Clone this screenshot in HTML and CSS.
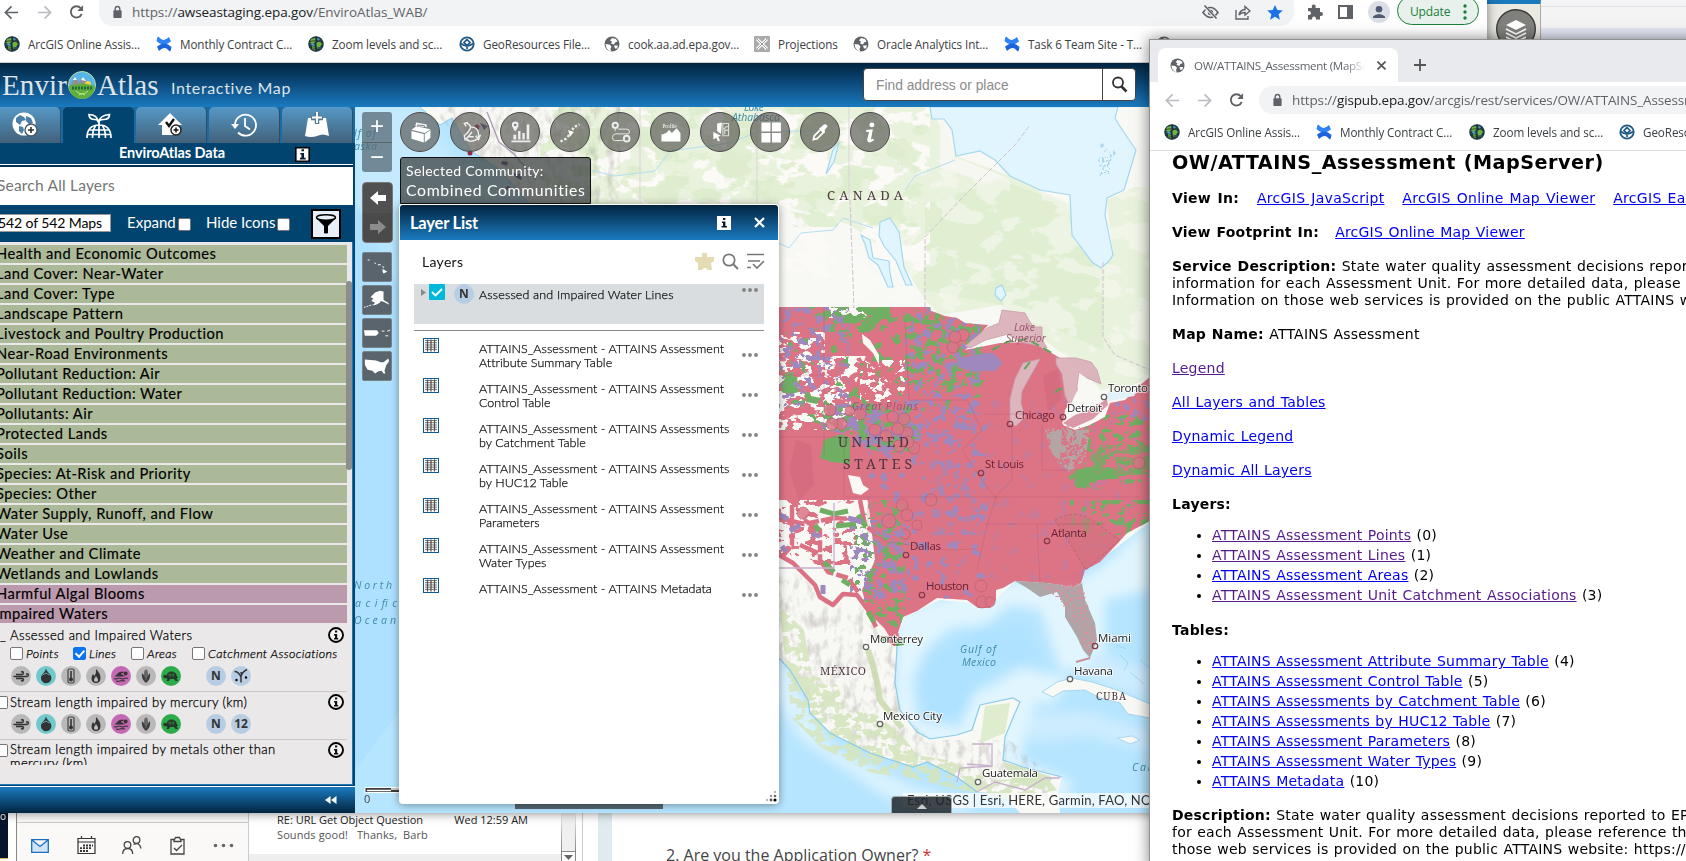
FILE: index.html
```html
<!DOCTYPE html>
<html lang="en">
<head>
<meta charset="utf-8">
<title>EnviroAtlas Interactive Map</title>
<link rel="stylesheet" href="styles.css">
</head>
<body>
<svg class="defs" width="0" height="0">
  <symbol id="back" viewBox="0 0 16 16"><path d="M15 8H2M8 1.5 1.5 8 8 14.5" fill="none" stroke="currentColor" stroke-width="1.8"/></symbol>
  <symbol id="fwd" viewBox="0 0 16 16"><path d="M1 8h13M8 1.5 14.5 8 8 14.5" fill="none" stroke="currentColor" stroke-width="1.8"/></symbol>
  <symbol id="reload" viewBox="0 0 16 16"><path d="M13.6 10A6 6 0 1 1 12.6 4" fill="none" stroke="currentColor" stroke-width="2"/><path d="M15 .8V7H8.8z" fill="currentColor"/></symbol>
  <symbol id="lock" viewBox="0 0 12 16"><rect x="1.5" y="5.5" width="9" height="8.5" rx="1" fill="#5f6368"/><path d="M3.5 6V4a2.5 2.5 0 0 1 5 0v2" fill="none" stroke="#5f6368" stroke-width="1.5"/></symbol>
  <symbol id="earth" viewBox="0 0 16 16"><circle cx="8" cy="8" r="7.8" fill="#243f46"/><path d="M3 3l4-1 1 3-3 3-3-1zM8 7l4-2 2 3-3 4-2 1zM4 10l3 1v3l-3-1z" fill="#6fb33c"/><path d="M9 2l3 1-2 2zM4 7l3 2-1 1-3-1zM11 11l2-1-1 3z" fill="#4aa3e0"/><path d="M1 6q7-3 14 1M1 11q7 3 14-1M8 0v16" fill="none" stroke="#17262c" stroke-width=".7"/></symbol>
  <symbol id="conf" viewBox="0 0 16 16"><path d="M1.500 1q1-.8 1.800.5Q7.500 6.500 13 1l2 4.500Q9 10 4 7.500 2 6.500.5 5z" fill="#2f84f5"/><path d="M14.500 15q-1 .8-1.800-.5Q8.500 9.500 3 15l-2-4.500Q7 6 12 8.500q2 1 3.500 2.500z" fill="#1c63dd"/></symbol>
  <symbol id="geo" viewBox="0 0 16 16"><circle cx="8" cy="8" r="6.700" fill="#fff" stroke="#205a87" stroke-width="1.800"/><path d="M8 3.500 11 6.500 8 9.500 5 6.500zM2 7.500q6 5 12 0M8 9.500V13" fill="none" stroke="#205a87" stroke-width="1.700"/></symbol>
  <symbol id="globe" viewBox="0 0 16 16"><circle cx="8" cy="8" r="7.500" fill="#5f6368"/><path d="M1.500 8l4 .5 2 2-1 2 .5 3Q2 14 1.500 8zM8 2l4 1 1.500 2.500-2.500 1-1 2-3-1 1-2-2-1zM10 9.500h4l-1 3-2 0z" fill="#fff"/></symbol>
  <symbol id="info" viewBox="0 0 16 16"><circle cx="8" cy="8" r="7" fill="#fff" fill-opacity=".5" stroke="#000" stroke-width="1.900"/><path d="M7 3.500h2.200v2H7zM6 7h3.200v4h1v1.500H6V11h1V8.400H6z" fill="#111"/></symbol>
  <symbol id="ibox" viewBox="0 0 14 14"><rect width="14" height="14" fill="#fff"/><path d="M6 2h2.400v2H6zM5 5.500h3.400V10H10v1.600H4.600V10H6V7H5z" fill="#0a1c2c"/></symbol>
  <symbol id="dots" viewBox="0 0 16 4"><g fill="#828282"><circle cx="2" cy="2" r="1.900"/><circle cx="8" cy="2" r="1.900"/><circle cx="14" cy="2" r="1.900"/></g></symbol>
  <symbol id="grid" viewBox="0 0 16 15"><rect x=".5" y=".5" width="15" height="14" fill="#fff" stroke="#0b5a92"/><path d="M4.500 1.500v12M8 1.500v12M11.500 1.500v12" stroke="#555" stroke-width="1.300"/><path d="M2 2.500h12M2 4.700h12M2 7h12M2 9.200h12M2 11.400h12" stroke="#555" stroke-width=".8"/></symbol>
  <symbol id="wind" viewBox="0 0 20 20"><circle cx="10" cy="10" r="10" fill="#b9b9b9"/><path d="M5 8.500h5.500q2 0 1.800-1.700T10 6M2.500 10.500H16q1.500-.3 1.300-1.600T15 8M5 12.500h6q1.800.2 1.400 1.600T10 14.500" fill="none" stroke="#333" stroke-width="1.500"/></symbol>
  <symbol id="drop" viewBox="0 0 20 20"><circle cx="10" cy="10" r="10" fill="#71c9cd"/><path d="M10 2.500q.5 2.500 3.500 5.500A5.200 5.200 0 1 1 5 11.500Q5 9 8 6.500 10 4 10 2.500z" fill="#333"/><path d="M6.500 9l3.500-2 3.500 2" fill="none" stroke="#71c9cd" stroke-width=".8"/></symbol>
  <symbol id="temp" viewBox="0 0 20 20"><circle cx="10" cy="10" r="10" fill="#b9b9b9"/><rect x="7" y="3" width="6" height="14" rx="1.500" fill="none" stroke="#444" stroke-width="1.200"/><path d="M10 5v7" stroke="#333" stroke-width="1.600"/><circle cx="10" cy="13.500" r="2" fill="#333"/></symbol>
  <symbol id="fire" viewBox="0 0 20 20"><circle cx="10" cy="10" r="10" fill="#b9b9b9"/><path d="M10 3q5 5 4.500 9.500Q14 17 10 17t-4.500-4.500Q5.500 10 7 8l1.500 2Q10.500 7 10 3zM10 10q-2.500 3-2 5 2 1.500 4 0 .5-2-2-5z" fill="#333" fill-rule="evenodd"/></symbol>
  <symbol id="swim" viewBox="0 0 20 20"><circle cx="10" cy="10" r="10" fill="#c569b4"/><path d="M3.500 10.500l5-4.500 4-.5v1.500l-3 .5 4.500 3z" fill="#333"/><circle cx="14.700" cy="7.500" r="1.900" fill="#333"/><path d="M3 12.500q2 1 3.500 0t3.500 0 3.500 0 3.500 0M5 15q2 .8 4 0t5 0" fill="none" stroke="#333" stroke-width="1.200"/></symbol>
  <symbol id="corn" viewBox="0 0 20 20"><circle cx="10" cy="10" r="10" fill="#b9b9b9"/><ellipse cx="10" cy="8.500" rx="2" ry="5" fill="#666"/><path d="M6 7q-1 6 4 10 5-4 4-10-2.500 2-4 7.500Q8.500 9 6 7z" fill="#3c3c3c"/></symbol>
  <symbol id="turtle" viewBox="0 0 20 20"><circle cx="10" cy="10" r="10" fill="#2cab49"/><path d="M5 11q1-5.500 5.500-5.500T16 10.500l1.500 1.500h-2l1.500 3h-2.500L13 13H9l-1 2H5.500l1-2.500H5z" fill="#26352a"/><circle cx="4" cy="10.500" r="1.700" fill="#26352a"/><path d="M7 9h7M9 6.500v5M12 6.500v5" stroke="#2cab49" stroke-width=".5"/></symbol>
  <symbol id="stream" viewBox="0 0 20 20"><circle cx="10" cy="10" r="10" fill="#b7cde3"/><path d="M3.500 5.500q4 0 6.500 5.500v5.500M10 10.500q1-4.500 6-7M10 6q0 2 1.500 2" fill="none" stroke="#333" stroke-width="1.500"/><circle cx="5.500" cy="14" r="1.200"/><circle cx="15" cy="11.500" r="1.200"/></symbol>
</svg>

<div class="desktop">
  <!-- mail client peeking out under the map window -->
  <section class="mail">
    <div class="mail-dark">o</div>
    <nav class="mail-nav">
      <svg width="18" height="14" viewBox="0 0 18 14"><path d="M.7.700h16.600v12.600H.7zM1 1l8 6.500L17 1" fill="#cfe4f7" stroke="#1a6fc0" stroke-width="1.300"/></svg>
      <svg width="19" height="19" viewBox="0 0 19 19"><path d="M1 2.500h17v15H1zM1 6h17M4.500 0v3M14.500 0v3" fill="none" stroke="#333" stroke-width="1.200"/><path d="M6 9.500h10M3 12.200h12M3 15h8" stroke="#333" stroke-width="1.800" stroke-dasharray="2 1"/></svg>
      <svg width="20" height="19" viewBox="0 0 20 19"><g fill="none" stroke="#444" stroke-width="1.300"><circle cx="5.500" cy="9" r="3.300"/><circle cx="14.500" cy="4" r="3.300"/><path d="M.7 18q0-5.500 5-5.500t5 5.500M11.500 8.500q6-3 7.500 4"/></g></svg>
      <svg width="15" height="19" viewBox="0 0 15 19"><path d="M1 3.500h3.500l1-2h4l1 2H14V18H1zM4 3.500v2h7v-2M4 12l2.500 2.500L12 9" fill="none" stroke="#444" stroke-width="1.300"/></svg>
      <svg width="21" height="5" viewBox="0 0 21 5"><g fill="#666"><circle cx="2.500" cy="2.500" r="1.800"/><circle cx="10.500" cy="2.500" r="1.800"/><circle cx="18.500" cy="2.500" r="1.800"/></g></svg>
    </nav>
    <div class="mail-list">
      <div class="mail-row"><span class="subj">RE: URL Get Object Question</span><span class="date">Wed 12:59 AM</span></div>
      <div class="mail-prev">Sounds good!&nbsp;&nbsp; Thanks,&nbsp; Barb</div>
    </div>
    <div class="mail-scroll"><i><svg width="9" height="5" viewBox="0 0 9 5"><path d="M0 0h9L4.500 5z" fill="#666"/></svg></i></div>
  </section>
  <section class="form"><p>2. Are you the Application Owner? <b>*</b></p></section>

  <!-- strip of windows on the upper right -->
  <section class="peek">
    <div class="peek-map"><svg width="40" height="40" viewBox="0 0 40 40"><circle cx="20" cy="20" r="19.300" fill="#80807c" stroke="#3b3b3b" stroke-width="1.400"/><path d="M20 11l10 5-10 5-10-5z" fill="#fff"/><path d="M10 20l10 5 10-5M10 24l10 5 10-5M10 28l10 5 10-5" fill="none" stroke="#fff" stroke-width="1.700"/></svg></div>
    <div class="peek-app"></div>
  </section>

  <!-- main browser window -->
  <section class="win win-main">
    <div class="addr">
      <svg class="ic c1" width="15" height="15"><use href="#back"/></svg>
      <svg class="ic c2" width="15" height="15"><use href="#fwd"/></svg>
      <svg class="ic c1" width="15" height="16"><use href="#reload"/></svg>
      <div class="pill">
        <svg width="11" height="15"><use href="#lock"/></svg>
        <span class="url u1">https://<b>awseastaging.epa.gov</b>/EnviroAtlas_WAB/</span>
        <span class="pill-icons">
          <svg width="17" height="15" viewBox="0 0 17 15"><path d="M1 7.500q7.500-10 15 0-7.500 10-15 0z" fill="none" stroke="#5f6368" stroke-width="1.700"/><circle cx="8.500" cy="7.500" r="2.700" fill="#5f6368"/><path d="M2 1l13 13" stroke="#f1f3f4" stroke-width="3"/><path d="M2.500.5l12 13" stroke="#5f6368" stroke-width="1.600"/></svg>
          <svg width="16" height="15" viewBox="0 0 16 15"><path d="M1 5v9h12v-3M4 10q1-5 6-5.500V1.500L15 6l-5 4V7.500Q6 7.500 4 10z" fill="none" stroke="#5f6368" stroke-width="1.400"/></svg>
          <svg width="16" height="15" viewBox="0 0 16 15"><path d="M8 0l2.300 5 5.500.5-4.200 3.700 1.300 5.500L8 11.800l-4.900 2.900 1.300-5.500L.2 5.500 5.700 5z" fill="#1a73e8"/></svg>
        </span>
      </div>
      <svg width="16" height="16" viewBox="0 0 16 16"><path d="M1 4h4q-1-3.500 1.700-3.500T8.500 4H13v4q3-.5 3 2t-3 2v3.500H9q0-3-2-3t-2 3H1V11q3 0 3-2T1 7z" fill="#5f6368"/></svg>
      <svg width="15" height="14" viewBox="0 0 15 14"><path d="M1 1h13v12H1z" fill="none" stroke="#5f6368" stroke-width="2"/><path d="M9 0h6v14H9z" fill="#5f6368"/></svg>
      <svg width="22" height="22" viewBox="0 0 22 22"><circle cx="11" cy="11" r="11" fill="#dbdfe5"/><circle cx="11" cy="8.300" r="3.300" fill="#505a72"/><path d="M5 17v-1.500q2.500-2.500 6-2.500t6 2.500V17z" fill="#505a72"/></svg>
      <span class="update">Update <svg width="4" height="16" viewBox="0 0 4 16"><g fill="#188038"><circle cx="2" cy="2" r="1.700"/><circle cx="2" cy="8" r="1.700"/><circle cx="2" cy="14" r="1.700"/></g></svg></span>
    </div>
    <div class="marks m1">
      <span><svg width="16" height="16"><use href="#earth"/></svg>ArcGIS Online Assis...</span>
      <span><svg width="16" height="16"><use href="#conf"/></svg>Monthly Contract C...</span>
      <span><svg width="16" height="16"><use href="#earth"/></svg>Zoom levels and sc...</span>
      <span><svg width="16" height="16"><use href="#geo"/></svg>GeoResources File...</span>
      <span><svg width="16" height="16"><use href="#globe"/></svg>cook.aa.ad.epa.gov...</span>
      <span><svg width="16" height="16" viewBox="0 0 16 16"><rect width="16" height="16" rx="1" fill="#aaa"/><path d="M3 3l10 10M13 3 3 13" stroke="#fff" stroke-width="3"/><path d="M3 3l10 10M13 3 3 13" stroke="#999"/></svg>Projections</span>
      <span><svg width="16" height="16"><use href="#globe"/></svg>Oracle Analytics Int...</span>
      <span><svg width="16" height="16"><use href="#conf"/></svg>Task 6 Team Site - T...</span>
      <span class="more"><svg width="16" height="16"><use href="#globe"/></svg></span>
      <span class="folder"><svg width="12" height="10" viewBox="0 0 12 10"><path d="M.5.500h11v9H.5z" fill="#f4cf63" stroke="#caa23a"/></svg></span>
    </div>

    <header class="banner">
      <div class="logo"><span>Envir</span><svg width="28" height="28" viewBox="0 0 28 28"><circle cx="14" cy="14" r="13.500" fill="#57b6e8" stroke="#b8dca0"/><path d="M2 15 7 6l4 5 4-5 8 9z" fill="#8e8f98"/><path d="M5 9l2-3 2 3zM13 9l2-3 3 4z" fill="#fff"/><circle cx="20" cy="13" r="3" fill="#f7d43c"/><path d="M1 15q13-5 26 0a13 13 0 0 1-26 0z" fill="#5fae3e"/><path d="M4 17h20" stroke="#246b35" stroke-width="3" stroke-dasharray="2 1"/><path d="M8 20q6 6 12 0M11 24q3-3 6 0" fill="none" stroke="#b9e58a"/></svg><span>Atlas</span></div>
      <div class="tagline">Interactive Map</div>
      <div class="find"><span>Find address or place</span><i><svg width="17" height="17" viewBox="0 0 17 17"><circle cx="7" cy="6.500" r="5" fill="none" stroke="#333" stroke-width="1.800"/><path d="M10.500 10.500l5 5" stroke="#333" stroke-width="2.600"/></svg></i></div>
    </header>

    <div class="work">
      <aside class="side">
        <div class="tabs">
          <div class="tab first"><svg width="28" height="26" viewBox="0 0 28 26"><circle cx="13" cy="12" r="11.500" fill="#fff"/><path d="M9 3l4 2 2 3-4 1-2 4-4-3 0-4zM15 4l5 2 2 5-4 1-3-3zM8 14l4 1 1 3-2 4-3-3z" fill="#4a7fa6"/><circle cx="20" cy="18" r="6" fill="#fff" stroke="#45596a" stroke-width="1.400"/><path d="M17 18h6M20 15v6" stroke="#333" stroke-width="1.600"/></svg></div>
          <div class="tab on"><svg width="26" height="26" viewBox="0 0 26 26"><g fill="none" stroke="#fff" stroke-width="1.700"><path d="M1 25q0-13 12-13t12 13M9.500 13q-3 4-3 12M16.500 13q3 4 3 12M13 8v17M3 17h20M1.500 21.500h23"/><path d="M12.500 9Q11 1.500 3 1.500q0 5 6 5 3 0 3.500 3Q14 2 23.500 1.500q0 5-6 5-4 0-5 3"/></g></svg></div>
          <div class="tab"><svg width="26" height="24" viewBox="0 0 26 24"><path d="M12 0 24 12h-3v10H4V12H0z" fill="#fff"/><path d="M8 9l3 4 5-7" fill="none" stroke="#111" stroke-width="2.400"/><circle cx="18" cy="17" r="5" fill="#fff" stroke="#222" stroke-width="1.500"/><path d="M15.500 17h5M18 14.500v5" stroke="#111" stroke-width="1.500"/></svg></div>
          <div class="tab"><svg width="26" height="24" viewBox="0 0 26 24"><path d="M4 12a10.500 10.500 0 1 1 3 7.500M14 5v8l5 3.500" fill="none" stroke="#fff" stroke-width="1.800"/><path d="M0 11h8l-4 5z" fill="#fff"/></svg></div>
          <div class="tab"><svg width="24" height="26" viewBox="0 0 24 26"><path d="M3 6h18l3 18q-6-3-12 0-6 2-12 0z" fill="#fff"/><path d="M12 0v12M6 6h12" stroke="#527a98" stroke-width="4.500"/><path d="M12 0v11M7 5.500h10" stroke="#fff" stroke-width="2"/></svg></div>
        </div>
        <div class="side-title"><b>EnviroAtlas Data</b><svg width="15" height="15" viewBox="0 0 14 14"><use href="#ibox"/><path d="M.75.75h12.500v12.500H.75z" fill="none" stroke="#000" stroke-width="1.500"/></svg></div>
        <div class="side-search">Search All Layers</div>
        <div class="filters">
          <span class="count">542 of 542 Maps</span>
          <label class="f1">Expand<i class="cb"></i></label>
          <label class="f2">Hide Icons<i class="cb"></i></label>
          <span class="funnel"><svg width="22" height="20" viewBox="0 0 22 20"><path d="M1 4l8 8v7q2 1 4 0v-7l8-8q-10 4-20 0z"/><ellipse cx="11" cy="3.500" rx="9.500" ry="2.700" fill="#e9eff7" stroke="#000" stroke-width="1.500"/></svg></span>
        </div>
        <div class="list">
          <div class="cats">
            <p>Health and Economic Outcomes</p><p>Land Cover: Near-Water</p><p>Land Cover: Type</p><p>Landscape Pattern</p><p>Livestock and Poultry Production</p><p>Near-Road Environments</p><p>Pollutant Reduction: Air</p><p>Pollutant Reduction: Water</p><p>Pollutants: Air</p><p>Protected Lands</p><p>Soils</p><p>Species: At-Risk and Priority</p><p>Species: Other</p><p>Water Supply, Runoff, and Flow</p><p>Water Use</p><p>Weather and Climate</p><p>Wetlands and Lowlands</p><p class="pk">Harmful Algal Blooms</p><p class="pk imp">Impaired Waters</p>
          </div>
          <div class="entry e1">
            <div class="et"><em>_</em><span>Assessed and Impaired Waters</span><svg width="16" height="16"><use href="#info"/></svg></div>
            <div class="subs"><i class="cb"></i><span class="s1">Points</span><i class="cb ck"></i><span class="s2">Lines</span><i class="cb"></i><span class="s3">Areas</span><i class="cb"></i><span class="s4">Catchment Associations</span></div>
            <div class="icons"><svg><use href="#wind"/></svg><svg><use href="#drop"/></svg><svg><use href="#temp"/></svg><svg><use href="#fire"/></svg><svg><use href="#swim"/></svg><svg><use href="#corn"/></svg><svg><use href="#turtle"/></svg><b class="gap">N</b><svg><use href="#stream"/></svg></div>
          </div>
          <div class="entry e2">
            <div class="et"><i class="cb"></i><span>Stream length impaired by mercury (km)</span><svg width="16" height="16"><use href="#info"/></svg></div>
            <div class="icons"><svg><use href="#wind"/></svg><svg><use href="#drop"/></svg><svg><use href="#temp"/></svg><svg><use href="#fire"/></svg><svg><use href="#swim"/></svg><svg><use href="#corn"/></svg><svg><use href="#turtle"/></svg><b class="gap">N</b><b>12</b></div>
          </div>
          <div class="entry e3">
            <div class="et"><i class="cb"></i><span>Stream length impaired by metals other than<br>mercury (km)</span><svg width="16" height="16"><use href="#info"/></svg></div>
          </div>
          <div class="thumb"></div>
        </div>
        <div class="side-foot"><svg width="12" height="8" viewBox="0 0 12 8"><path d="M5.500 0v8L0 4zM11.500 0v8L6 4z" fill="#fff"/></svg></div>
      </aside>

      <main class="mapbox">
        <svg class="map" width="795" height="706" viewBox="355 107 795 706">
          <defs>
            <filter id="land1" x="0" y="0" width="1" height="1" color-interpolation-filters="sRGB"><feTurbulence type="fractalNoise" baseFrequency=".03 .045" numOctaves="5" seed="9" result="t"/><feColorMatrix in="t" values="0 0 0 0 0 0 0 0 0 0 0 0 0 0 0 0 22 0 0 -11.800" result="a"/><feComposite in="SourceGraphic" in2="a" operator="in"/></filter>
            <filter id="land2" x="0" y="0" width="1" height="1" color-interpolation-filters="sRGB"><feTurbulence type="fractalNoise" baseFrequency=".025 .04" numOctaves="5" seed="33" result="t"/><feColorMatrix in="t" values="0 0 0 0 0 0 0 0 0 0 0 0 0 0 0 22 0 0 0 -11.500" result="a"/><feComposite in="SourceGraphic" in2="a" operator="in"/></filter>
            <filter id="holes" x="0" y="0" width="1" height="1" color-interpolation-filters="sRGB"><feTurbulence type="fractalNoise" baseFrequency=".085 .13" numOctaves="3" seed="9" result="t"/><feColorMatrix in="t" values="0 0 0 0 0 0 0 0 0 0 0 0 0 0 0 0 30 0 0 -13.600" result="a"/><feComposite in="SourceGraphic" in2="a" operator="in"/></filter>
            <filter id="grn" x="0" y="0" width="1" height="1" color-interpolation-filters="sRGB"><feTurbulence type="fractalNoise" baseFrequency=".12 .15" numOctaves="3" seed="23" result="t"/><feColorMatrix in="t" values="0 0 0 0 0 0 0 0 0 0 0 0 0 0 0 30 0 0 0 -16.800" result="a"/><feComposite in="SourceGraphic" in2="a" operator="in"/></filter>
            <filter id="pur" x="0" y="0" width="1" height="1" color-interpolation-filters="sRGB"><feTurbulence type="fractalNoise" baseFrequency=".13 .13" numOctaves="3" seed="51" result="t"/><feColorMatrix in="t" values="0 0 0 0 0 0 0 0 0 0 0 0 0 0 0 0 0 30 0 -17.300" result="a"/><feComposite in="SourceGraphic" in2="a" operator="in"/></filter>
            <filter id="few" x="0" y="0" width="1" height="1" color-interpolation-filters="sRGB"><feTurbulence type="fractalNoise" baseFrequency=".1 .1" numOctaves="4" seed="61" result="t"/><feColorMatrix in="t" values="0 0 0 0 0 0 0 0 0 0 0 0 0 0 0 0 0 30 0 -19.200" result="a"/><feComposite in="SourceGraphic" in2="a" operator="in"/></filter>
            <filter id="speck" x="0" y="0" width="1" height="1" color-interpolation-filters="sRGB"><feTurbulence type="fractalNoise" baseFrequency=".4" numOctaves="2" seed="7" result="t"/><feColorMatrix in="t" values="0 0 0 0 0 0 0 0 0 0 0 0 0 0 0 20 0 0 0 -11" result="a"/><feComposite in="SourceGraphic" in2="a" operator="in"/></filter>
            <filter id="relief" x="0" y="0" width="1" height="1" color-interpolation-filters="sRGB"><feTurbulence type="fractalNoise" baseFrequency=".14 .07" numOctaves="4" seed="3" result="t"/><feColorMatrix in="t" values="0 0 0 0 .6 0 0 0 0 .58 0 0 0 0 .55 0 3 0 0 -1.400" result="a"/><feComposite in="a" in2="SourceAlpha" operator="in"/></filter>
            <filter id="soft" x="-.1" y="-.1" width="1.200" height="1.200"><feGaussianBlur stdDeviation="6"/></filter>
            <clipPath id="us"><path d="M779 307H921L924 301 929 302 931 311 945 316 957 318 965 323 988 325 975 340 965 350 1000 343 1030 342 1045 349 1060 358 1072 375 1075 395 1065 410 1063 425 1075 430 1090 425 1105 417 1110 403 1125 400 1140 385 1150 377V521L1127 533 1118 543 1100 562 1085 570 1081 583 1073 587 1047 583 1015 581 1003 588 996 590 996 600 990 608 978 608 967 600 937 598 917 611 903 617 898 633 902 645 893 645 880 636 876 625 857 595 843 590 825 580 812 560 779 556z"/></clipPath>
          </defs>
          <rect x="355" y="107" width="795" height="706" fill="#b6e5ff"/>
          <path d="M355 200l45 90v420l-45 60z" fill="#a9ddff" opacity=".6"/>
          <g filter="url(#soft)"><path d="M895 610 1020 580 1080 580 1110 560 1150 520V590L1105 600 1105 670 1060 670 1040 610 1010 605 985 625 950 628 925 650 912 680 918 720 960 728 975 690 1020 685 1035 700 1020 760 1070 780 1070 800 1000 770 1000 740 930 745 895 720z" fill="#e1f5fe"/><path d="M985 690l35-22 50 10-15 25-35 0z" fill="#e1f5fe"/><path d="M779 650 830 745 910 785 980 805 960 812 890 800 800 740 770 690z" fill="#d9f2ff"/><path d="M420 107l40 60 60 40H355V107z" fill="#d3efff" opacity=".5"/><path d="M1090 650l60 20v30l-60-20zM1030 712l60 0 60 20v20l-60-15-60 5z" fill="#cdecff"/><path d="M930 655l50-28 45 2 15 30-55 15-20 40-35 5-10-30z" fill="#aee2ff"/></g>
          <!-- land -->
          <path d="M420 107 440 125 452 118 470 150 500 170 530 204V310H779V560L779 658 790 670 808 700 810 713 830 733 870 753 913 767 927 762 957 777 977 792 1003 793 1020 813H1060L1058 793 1062 777 1023 767 1003 760 1005 737 1015 713 1020 702 1013 698 980 705 972 730 957 735 930 739 917 732 900 710 895 683 897 647 898 633 905 617 940 600 990 605 1015 581 1085 570 1100 560 1150 522V107z" fill="#f8f8f5"/>
          <path d="M560 107H930L956 156 1010 176 1072 205 1092 262 1101 268 1113 255 1107 200 1150 180V378L1105 396 1070 360 1000 305 940 315 925 300 900 260 850 225 779 204H590z" fill="#e8f2dc"/>
          <path d="M925 205 1000 180 1072 205 1092 262 1105 270 1103 350 1000 305 925 290z" fill="#e0efd2"/>
          <path d="M1117 107l33 0v80l-16 0 4-30z" fill="#f8f8f5"/>
          <rect x="540" y="107" width="390" height="170" fill="#fbfaf7" filter="url(#land1)"/>
          <rect x="850" y="160" width="300" height="220" fill="#fbfaf7" filter="url(#land2)" opacity=".5"/>
          <rect x="540" y="107" width="390" height="120" fill="#dcedcb" filter="url(#land2)" opacity=".8"/>
          <path d="M940 107l15 50 50 20-20 5-45-15z" fill="#f6f7f1"/>
          <path d="M430 107H620V204H530L470 150z" fill="#000" filter="url(#relief)" opacity=".32"/>
          <path d="M779 570 800 575 833 606 857 597 875 627 897 640 895 683 900 710 930 740 1010 740 1050 775 1050 812 1003 793 927 762 870 753 810 713 779 658z" fill="#000" filter="url(#relief)" opacity=".34"/>
          <path d="M779 605l25 25 8 45 25 10 10 25 30 5 25 20 15 20 30 5 50 20 50-2 10 12-45 10-60-12-40-10-40-5-50-25-30-30z" fill="#d5e5bd" filter="url(#holes)" opacity=".85"/>
          <path d="M868 650q10 30 12 50l22 28" fill="none" stroke="#c5d8a8" stroke-width="6" opacity=".8"/><path d="M985 706l25-3-5 30-25 10z" fill="#deedcd"/><path d="M1003 762l30 8 20 8-10 12-30-8z" fill="#d5e5c2"/>
          <path d="M420 107 440 125 452 118 470 150 500 170 530 204" fill="none" stroke="#8fcbe8"/>
          <path d="M779 658 790 670 808 700 810 713 830 733 870 753 913 767 927 762 957 777 977 792M898 633 897 647 895 683 900 710 917 732 930 739 957 735 972 730 980 705 1013 698 1020 702 1015 713 1005 737 1003 760 1023 767 1062 777" fill="none" stroke="#8ccbea" stroke-width="1.200"/>
          <!-- water bodies -->
          <g fill="#e1f5fe" stroke="#a5d8ef" stroke-width="1.200">
            <path d="M930 107 932 119 944 119 952 130 956 156 980 151 995 160 1010 176 1040 190 1070 195 1072 235 1092 262 1101 268 1108 262 1113 255 1105 215 1107 198 1124 190 1130 170 1136 150 1119 125 1115 118 1118 107z"/>
            <path d="M880 222l10-4 9 14 5 35 8 18-6 0-10-24-12-15-5-10zM861 235l9 5 3 18 16 3 1 12 3 14-5 0-10-22-9-7-4-14zM996 288l6-3 4 10-5 6-6-6zM833 150l6-8-5 20-8 12z"/>
          </g>
          <path d="M779 243l10 5 12-15 32-3 10-12 30 10M590 170l25 6 40-5 15-20 60-8 30-12 60 0M905 190l10-14 40-16" fill="none" stroke="#b5dff2"/>
          <path d="M850 200l4 108M925 307V237l40-42 50-50 15-20M1103 262v75l12 18 35 15" fill="none" stroke="#cfc3d0" stroke-width="1" stroke-dasharray="5 2"/>
          <path d="M640 107v95M757 107v95M849 107v93" stroke="#ddd2df"/>
          <g fill="#7cb7cf" opacity=".5"><path d="M1098 160l8-12 6 8-3 18-10 2z" filter="url(#speck)"/><path d="M1100 145l3-2 1 3-3 2zM1113 150l3 3-3 3z"/></g>
          <!-- assessment overlay -->
          <g opacity=".95">
            <g clip-path="url(#us)">
              <path d="M868 307H1150V640H985L898 650 884 628 868 612 862 590 875 560 868 500H779V430H862L850 400 868 350z" fill="#dc6d80"/>
              <path d="M779 307h95v150h-95z" fill="#dc6d80" filter="url(#holes)"/>
              <path d="M779 307h50v25h-50zM825 318h45v38h-45zM779 430h80v10h-80z" fill="#dc6d80"/>
              <path d="M779 500h95v65h-95z" fill="#dc6d80" filter="url(#grn)"/>
              <path d="M779 307h90v123h-90z" fill="#69ab5c" filter="url(#few)"/>
              <path d="M825 307h50v25h-50z" fill="#69ab5c" filter="url(#holes)"/><path d="M875 307h15v12h-8l-8 8-6-4zM824 440l18-6 8 4 0 26-18-2-12-4zM787 375l10 2 2 15-12 3-7-9zM806 395l15 3-4 6-10-2z" fill="#69ab5c"/>
              <path d="M905 307h80v80h-80zM855 500h50v130h-50z" fill="#69ab5c" filter="url(#grn)"/>
              <path d="M868 320h110v100h-110z" fill="#69ab5c" filter="url(#few)" transform="translate(4 -6)"/>
              <path d="M905 307h75v140h-75zM779 307h70v100h-70zM850 520h60v80h-60z" fill="#9b83bb" filter="url(#pur)"/>
              <path d="M960 358l25-5 8 0 10 10-8 8-25 0-14-5z" fill="#9b83bb"/>
              <path d="M868 400h120v200H868z" fill="#9b83bb" filter="url(#few)"/><path d="M930 460h55v75h-55z" fill="#9b83bb" filter="url(#pur)" opacity=".8"/>
              <path d="M988 400h160v180H988z" fill="#9b83bb" filter="url(#few)" opacity=".3"/>
              <path d="M1085 415l65 0v65l-70 12-12-15 16-12z" fill="#69ab5c" filter="url(#grn)"/>
              <path d="M1100 445h50v30h-75z" fill="#69ab5c" filter="url(#holes)" opacity=".7"/>
              <path d="M1075 470l12-2 12 6 8-6 10 3-8 8-18 2-6 8-10-4z" fill="#69ab5c"/>
              <path d="M1070 500h80v35h-80z" fill="#69ab5c" filter="url(#grn)"/>
              <path d="M1112 405l38-15v30h-38z" fill="#9b83bb" filter="url(#pur)"/>
              <path d="M824 408l16-4 30-1 36 12 16 20-6 16-28 2-30-6-8-12-28-6z" fill="#9b83bb" filter="url(#holes)"/><path d="M824 408l16-4 30-1 36 12 16 20-6 16-28 2-30-6-8-12-28-6z" fill="#69ab5c" filter="url(#grn)"/>
              <path d="M848 475l12 2 3 8 6 4-8 6-8-2zM818 507l12-5 34 3 3 8-12 5-15-3-8 4-14 0z" fill="#faf9f5"/>
              <path d="M862 334l8 6 9 15 0 10-6-12-10-10z" fill="#faf9f5"/>
              <path d="M860 360h45v42h-45z" fill="#faf9f5" filter="url(#grn)"/>
              <g fill="#c9576c" opacity=".35"><path d="M796 440l15 5 3 40-15 15-10-30zM1043 375l15-6 4 30-14 12z"/></g>
            </g>
            <g fill="#dc6d80" stroke="#a85866" stroke-width=".6" fill-opacity=".85">
              <circle cx="830" cy="410" r="6"/><circle cx="841" cy="424" r="6"/><circle cx="850" cy="411" r="5"/><circle cx="860" cy="414" r="6"/><circle cx="875" cy="430" r="6"/><circle cx="886" cy="436" r="6"/><circle cx="893" cy="417" r="6"/><circle cx="904" cy="419" r="6"/><circle cx="907" cy="433" r="6"/><circle cx="914" cy="448" r="6"/><circle cx="899" cy="446" r="6"/><circle cx="832" cy="424" r="6"/><circle cx="898" cy="429" r="6"/><circle cx="908" cy="442" r="6"/><circle cx="963" cy="335" r="6"/><circle cx="953" cy="347" r="6"/><circle cx="955" cy="337" r="6"/><circle cx="931" cy="500" r="6"/><circle cx="902" cy="505" r="6"/><circle cx="907" cy="515" r="6"/><circle cx="889" cy="521" r="7"/><circle cx="917" cy="525" r="5"/><circle cx="905" cy="534" r="5"/><circle cx="803" cy="513" r="6"/>
              <circle cx="981" cy="586" r="6"/><circle cx="982" cy="602" r="6"/><circle cx="990" cy="602" r="5"/><circle cx="1139" cy="463" r="6"/>
            </g>
            <path d="M1055 520q22-12 40 2l25 18-34 30-12-20z" fill="#d06a78" fill-opacity=".6" stroke="#a55764" stroke-width=".7" stroke-dasharray="3 2"/>
            <path d="M966 412l4-8 7 10zM960 430l5-8 6 8zM897 536l4-9 5 9z" fill="#9b83bb"/>
            <g fill="none" stroke="#da6a7d" stroke-width="4.500" stroke-linejoin="round"><path d="M779 555 793 563 815 585 820 597 833 605 843 594 857 595 868 610 876 627"/><path d="M792 505V545L782 557M779 518l25 6 30-6 30 2M804 520l16 10 0 30 8 12 20 6 10 14M800 545l18 8M860 500l5 25 10 8" stroke-dasharray="26 3 12 2"/></g>
            <path d="M880 636h20l4 8-10 2z" fill="#cf5468"/><path d="M895 641l8-2 1 6-8 1z" fill="#4f9c48"/>
            <g fill="none" stroke="#69ab5c" stroke-width="5"><path d="M824 562l10 10M842 580l8 5M868 612l6 10M882 638l6 2M820 510l14 4 14-3M858 515l8 12M815 525l4 6M836 526l20-2"/></g>
            <g fill="none" stroke="#9b83bb" stroke-width="5"><path d="M823 585v9M780 515l8 4M800 525l-10 6M812 534l8 2M782 546l4 6M848 518l14 4"/></g>
            <path d="M1015 581 1047 583 1073 587 1082 583 1085 600 1095 623 1097 640 1090 658 1083 650 1077 637 1065 617 1065 607 1057 592 1040 597 1027 588z" fill="#a9a3a4"/>
            <path d="M1040 585 1082 583 1097 640 1090 658 1060 600z" fill="#d88b98" filter="url(#speck)"/><path d="M1076 662l14-4" stroke="#c88b98" stroke-width="2"/>
            <path d="M1045 429l35-2 10 3-5 30-16 12-10-8-10-16z" fill="#b2a1a1" filter="url(#grn)"/><path d="M1045 429l35-2 10 3-5 30-16 12-10-8-10-16z" fill="#b2a1a1" filter="url(#speck)"/><path d="M1050 432l12-2-2 30-8-6zM1075 430l10 0-6 18z" fill="#b2a1a1"/>
            <!-- great lakes -->
            <g fill="#dcb2bb" stroke="#c49aa6" stroke-width=".8"><path d="M965 346l22-18 12-5 3-13 23 3 8 14 9 0 0 12 5 9-12-3-15-3-12-8-22 6-16 8z"/><path d="M1010 424l0-25 5-20 8-16 17-4-9 16-9 16-1 12 4 14-9 9z"/><path d="M1056 358l20 0 15 4 6 8 4 14-14-6-8-6-2 14 1 12-5 20-5 10-2-5 4-17-5-10-3-22-6-10z"/></g>
            <path d="M1083 380l8 0 10 10 9-2-4 8 2 5-14 5-14 8-15 12-3-3 6-12 7-16z" fill="#f8f8f5"/>
            <path d="M1108 392l30-2-4 6-26 5z" fill="#dff1fa"/><path d="M1063 423l12-8 12-4 20-12 1 6-15 14-20 9z" fill="#d993a2"/>
            <path d="M992 350l15-8 20-3 25 14M1055 393q5-8 11 0M1030 362l-8 10" fill="none" stroke="#5ba054" stroke-width="2" stroke-dasharray="9 5"/>
          </g>
          <path d="M779 437h65v60h90l55 0h150M824 307v150M905 320l4 80h58l15 30-20 20 20 30 15 20M984 414h50M1012 425v55l-15 15-10 30-10 45M1042 425v45l30 0M779 375h45M868 497v35l20 10 60 8 30-1M1037 524l3 60M985 524h120" fill="none" stroke="#a34a60" stroke-opacity=".25"/>
          <path d="M779 568h55v-65M972 744h20v22l-25-2M992 766l-32 2-3 14M977 792l18-10 30 8 20-12 15 0" fill="none" stroke="#c7b1ce" stroke-width="1.300"/>
          <!-- caribbean -->
          <g fill="#f8f8f5" stroke="#a6d6ee"><path d="M1042 692l15-10 15-4 20 4 25 8 33 14v14l-22-4-8-11-20-5-15-8-22 1-10 6z"/><path d="M1117 738l15-2 8 4-10 4z"/></g>
          <g fill="none" stroke="#a3d6ee"><path d="M1120 655l8 8-4 8M1116 645l10 4M1130 672l14 12M1140 660l10 8"/></g>
          <g fill="#9a2646"><circle cx="477" cy="127" r="2.500"/><circle cx="470" cy="153" r="2.500"/><path d="M480 123l8 3-4 4z" fill="#59407c"/><path d="M502 161l6 1-1 4-6-2zM512 173l8 1 2 6-5-2z" fill="#59407c"/><circle cx="508" cy="188" r="2"/></g>
          <path d="M487 112l12 30 15 12 22 26" fill="none" stroke="#8e79a0" stroke-width="1.400" opacity=".7"/>
          <!-- labels -->
          <g class="sea"><text x="354" y="137" textLength="22">lf of</text><text x="354" y="150" textLength="23">aska</text><text x="354" y="589" textLength="38">North</text><text x="355" y="607" textLength="42">acific</text><text x="354" y="624" textLength="42">Ocean</text><text x="744" y="111" textLength="20">Lake</text><text x="732" y="121" textLength="48">Athabasca</text><text x="960" y="653" textLength="36">Gulf of</text><text x="962" y="666" textLength="34">Mexico</text><text x="1132" y="771" textLength="20">Car</text></g>
          <g class="sea dim"><text x="1014" y="331" textLength="21">Lake</text><text x="1006" y="342" textLength="40">Superior</text><text x="852" y="410" textLength="66">Great Plains</text></g>
          <g class="ctry"><text x="827" y="200" textLength="76" font-size="13">CANADA</text><text x="838" y="447" textLength="71" font-size="14">UNITED</text><text x="843" y="469" textLength="69" font-size="14">STATES</text><text x="820" y="675" textLength="46" font-size="11">MÉXICO</text><text x="1096" y="700" textLength="30" font-size="10">CUBA</text></g>
          <g class="city in"><text x="1015" y="419" textLength="40">Chicago</text><text x="985" y="468" textLength="39">St Louis</text><text x="910" y="550" textLength="31">Dallas</text><text x="926" y="590" textLength="43">Houston</text><text x="1051" y="537" textLength="36">Atlanta</text></g>
          <g class="city"><text x="1067" y="412" textLength="35">Detroit</text><text x="1108" y="392" textLength="40">Toronto</text><text x="870" y="643" textLength="53">Monterrey</text><text x="883" y="720" textLength="59">Mexico City</text><text x="982" y="777" textLength="56">Guatemala</text><text x="1098" y="642" textLength="33">Miami</text><text x="1074" y="675" textLength="39">Havana</text></g>
          <g fill="#fff" fill-opacity=".7" stroke="#666" stroke-width="1.300"><circle cx="1104" cy="397" r="2.700"/><circle cx="866" cy="647" r="2.700"/><circle cx="880" cy="724" r="2.700"/><circle cx="978" cy="782" r="2.700"/><circle cx="1070" cy="679" r="2.700"/></g>
          <g fill="none" stroke="#8a3b4b" stroke-width="1.300"><circle cx="1010" cy="424" r="2.700"/><circle cx="1063" cy="417" r="2.700"/><circle cx="981" cy="473" r="2.700"/><circle cx="906" cy="555" r="2.700"/><circle cx="922" cy="595" r="2.700"/><circle cx="1047" cy="541" r="2.700"/><circle cx="1095" cy="646" r="2.700"/></g>
          <!-- scale bar -->
          <path d="M365 787.500h60v5h-60z" fill="#3b3b3b" stroke="#fff"/><path d="M367 790.500h24M391 789h12" stroke="#fff" stroke-width="1.500"/><text class="zero" x="364" y="803">0</text>
        </svg>

        <div class="zoomctl"><i>+</i><i>−</i></div>
        <div class="extent"><svg width="18" height="16" viewBox="0 0 18 16"><path d="M1 8l8-7v4h8v6H9v4z" fill="#fff"/></svg><svg width="18" height="16" viewBox="0 0 18 16"><path d="M17 8 9 1v4H1v6h8v4z" fill="#8b8b8b"/></svg></div>
        <div class="places">
          <svg viewBox="0 0 30 30"><path d="M5 7h2v1H5zM12 10l2 1-1 1zM16 12h3v1h-3zM20 14l3 1-1 1zM21 17l5 3-4 2-1-2z" fill="#fff"/></svg>
          <svg viewBox="0 0 30 30"><path d="M10 10l3-3 5-2 4 1 0 9 5 3 1 2-6-3-3-1-1 2-4 2-4 1 3-3-4-2 2-3-3-1z" fill="#fff"/><path d="M1 23l9-3" stroke="#fff" stroke-dasharray="2 1"/></svg>
          <svg viewBox="0 0 30 30"><path d="M1 12h14l2 3-3 3H2z" fill="#fff"/><path d="M20 13l3 0M24 18h3M26 13l3-1" stroke="#fff"/></svg>
          <svg viewBox="0 0 30 30"><path d="M2 8l12 1 5 2 3 0 5-4 1 3-3 4-2 6 1 3-2 0-2-3-4 1-3 2-3-3-5-1-3-5z" fill="#fff"/></svg>
        </div>
        <div class="tools">
          <i><svg viewBox="0 0 40 40"><path d="M11 19l13 3v9l-13-4zM25 22l6-4v8l-6 5zM11 17.500l5-3.500 15 3-6 4zM15 13.500l1-3.500 11 2 0 3" fill="#fff"/><path d="M17.500 14v-1.500l7.500 1v1.500" stroke="#777" fill="none"/></svg></i>
          <i><svg viewBox="0 0 40 40"><path d="M17 11q5 2 3 6t-6 7l1 5M16 14l-2-3 4-1M28 27q-6 5-12 1M20 30l-4-3 3-3M20 15q9-1 9 8v4M26 24l3 4 2-5M22 20l-4 5 6 0" fill="none" stroke="#eee" stroke-width="1.500"/></svg></i>
          <i><svg viewBox="0 0 40 40"><path d="M11 29h20v1.800H11zM13 23h3v5h-3zM18 19h2.500v9H18zM22.500 21H25v7h-2.500zM27 12h2.800v16H27z" fill="#eee"/><path d="M15 9a3.500 3.500 0 0 1 3.500 3.500q0 2-3.500 7-3.500-5-3.500-7A3.500 3.500 0 0 1 15 9z" fill="#eee"/><circle cx="15" cy="12.500" r="1.300" fill="#777"/></svg></i>
          <i><svg viewBox="0 0 40 40"><path d="M10 30l6-3 4-5 4-7 6-3" fill="none" stroke="#eee" stroke-width="2.500" stroke-dasharray="2.500 2"/><path d="M18 18l6 2-4 5z" fill="#fff"/></svg></i>
          <i><svg viewBox="0 0 40 40"><g fill="none" stroke="#eee" stroke-width="1.500"><circle cx="15" cy="13" r="2.800" stroke-width="2"/><circle cx="27" cy="27" r="3" stroke-width="2"/><path d="M15 17l0 2M18 17h9q3 0 3 3t-4 2H15q-3 1-3 4t3 3h8" stroke-width="1"/></g></svg></i>
          <i><svg viewBox="0 0 40 40"><text x="12" y="16" font-size="5.500" fill="#fff" font-family="Liberation Serif,serif">Profile</text><path d="M11 30V23l5-2 3-3 3 3 5-5 4 5v9z" fill="#fff"/></svg></i>
          <i><svg viewBox="0 0 40 40"><path d="M17 11l5-1-1 12-4-3zM13 20l8 4-3 1 2 4-2 1-2-4-3 2z" fill="#fff"/><path d="M23 11h6v13h-6zM24 17q2-3 5-3M25 22v-4h4" fill="none" stroke="#ddd" stroke-width="1.200"/></svg></i>
          <i><svg viewBox="0 0 40 40"><path d="M11 10h9.500v9.500H11zM22 10h9.500v9.500H22zM11 21h9.500v10H11zM22 21h9.500v10H22z" fill="#fff"/></svg></i>
          <i><svg viewBox="0 0 40 40"><path d="M13 28l1-4 7-7 3 3-7 7z" fill="none" stroke="#fff" stroke-width="1.800"/><path d="M19 16l2-1 3-3q3-1 4 2l-3 4 0 3-2 0z" fill="#fff"/></svg></i>
          <i><svg viewBox="0 0 40 40"><circle cx="22" cy="12.500" r="2.600" fill="#fff"/><path d="M16 18l7-1-2 11 3-1v2l-4 2q-3 0-3-3l2-8-3 0z" fill="#fff"/></svg></i>
        </div>
        <div class="community"><span>Selected Community:</span><strong>Combined Communities</strong></div>
        <div class="hint"></div>
        <div class="credits">Esri, USGS | Esri, HERE, Garmin, FAO, NOAA</div>
        <div class="drawer"><i></i></div>

        <section class="dialog">
          <header><b>Layer List</b><svg width="14" height="14"><use href="#ibox"/></svg><svg width="11" height="11" viewBox="0 0 11 11"><path d="M1 1l9 9M10 1l-9 9" stroke="#fff" stroke-width="2.200"/></svg></header>
          <div class="dhead"><span>Layers</span>
            <svg width="19" height="17" viewBox="0 0 19 17"><path d="M7 0h5v4h7v4l-3 2 1 7h-4l-2-2H9l-2 2H3V10L0 8V4h7z" fill="#e4dbb2"/></svg>
            <svg width="17" height="17" viewBox="0 0 17 17"><circle cx="7" cy="7" r="5.700" fill="none" stroke="#777" stroke-width="1.700"/><path d="M11 11l5 5" stroke="#777" stroke-width="2"/></svg>
            <svg width="18" height="17" viewBox="0 0 18 17"><path d="M0 1.500h17M1 8h12M0 14.500h4M6 11l4 4 7-7" fill="none" stroke="#777" stroke-width="1.600"/></svg>
          </div>
          <div class="row sel"><svg class="arr" width="5" height="7" viewBox="0 0 5 7"><path d="M0 0l5 3.500L0 7z" fill="#888"/></svg><svg class="tick" width="16" height="16" viewBox="0 0 16 16"><rect width="16" height="16" rx="1" fill="#00b9d8"/><path d="M3 8l3.500 3.500L13 5" fill="none" stroke="#fff" stroke-width="1.800"/></svg><b>N</b><span>Assessed and Impaired Water Lines</span><svg class="dots" width="16" height="4"><use href="#dots"/></svg></div>
          <hr>
          <div class="row"><svg width="16" height="15"><use href="#grid"/></svg><span>ATTAINS_Assessment - ATTAINS Assessment<br>Attribute Summary Table</span><svg class="dots" width="16" height="4"><use href="#dots"/></svg></div>
          <div class="row"><svg width="16" height="15"><use href="#grid"/></svg><span>ATTAINS_Assessment - ATTAINS Assessment<br>Control Table</span><svg class="dots" width="16" height="4"><use href="#dots"/></svg></div>
          <div class="row"><svg width="16" height="15"><use href="#grid"/></svg><span>ATTAINS_Assessment - ATTAINS Assessments<br>by Catchment Table</span><svg class="dots" width="16" height="4"><use href="#dots"/></svg></div>
          <div class="row"><svg width="16" height="15"><use href="#grid"/></svg><span>ATTAINS_Assessment - ATTAINS Assessments<br>by HUC12 Table</span><svg class="dots" width="16" height="4"><use href="#dots"/></svg></div>
          <div class="row"><svg width="16" height="15"><use href="#grid"/></svg><span>ATTAINS_Assessment - ATTAINS Assessment<br>Parameters</span><svg class="dots" width="16" height="4"><use href="#dots"/></svg></div>
          <div class="row"><svg width="16" height="15"><use href="#grid"/></svg><span>ATTAINS_Assessment - ATTAINS Assessment<br>Water Types</span><svg class="dots" width="16" height="4"><use href="#dots"/></svg></div>
          <div class="row"><svg width="16" height="15"><use href="#grid"/></svg><span>ATTAINS_Assessment - ATTAINS Metadata</span><svg class="dots" width="16" height="4"><use href="#dots"/></svg></div>
          <svg class="grip" width="12" height="12" viewBox="0 0 12 12"><g fill="#999"><circle cx="10" cy="2" r="1.200" fill="#bbb"/><circle cx="6" cy="6" r="1.200"/><circle cx="10" cy="6" r="1.300" fill="#666"/><circle cx="2" cy="10" r="1.200" fill="#bbb"/><circle cx="6" cy="10" r="1.400" fill="#555"/><circle cx="10" cy="10" r="1.600" fill="#000"/></g></svg>
        </section>
      </main>
    </div>
  </section>

  <!-- ArcGIS REST services window -->
  <section class="win win-rest">
    <div class="strip"><div class="btab"><svg width="15" height="15"><use href="#globe"/></svg><span>OW/ATTAINS_Assessment (MapServer)</span><svg width="9" height="9" viewBox="0 0 9 9"><path d="M.5.500l8 8M8.500.500l-8 8" stroke="#555" stroke-width="1.600"/></svg></div><svg width="12" height="12" viewBox="0 0 12 12"><path d="M6 0v12M0 6h12" stroke="#555" stroke-width="1.800"/></svg></div>
    <div class="addr2">
      <svg class="ic c2" width="15" height="15"><use href="#back"/></svg><svg class="ic c2" width="15" height="15"><use href="#fwd"/></svg><svg class="ic c1" width="15" height="16"><use href="#reload"/></svg>
      <div class="pill"><svg width="11" height="15"><use href="#lock"/></svg><span class="url u2">https://<b>gispub.epa.gov</b>/arcgis/rest/services/OW/ATTAINS_Assessment/MapServer</span></div>
    </div>
    <div class="marks m2">
      <span><svg width="16" height="16"><use href="#earth"/></svg>ArcGIS Online Assis...</span>
      <span><svg width="16" height="16"><use href="#conf"/></svg>Monthly Contract C...</span>
      <span><svg width="16" height="16"><use href="#earth"/></svg>Zoom levels and sc...</span>
      <span><svg width="16" height="16"><use href="#geo"/></svg>GeoResources File...</span>
    </div>
    <article class="rest">
      <h2>OW/ATTAINS_Assessment (MapServer)</h2>
      <p class="vi"><b>View In:</b> &nbsp; <a>ArcGIS JavaScript</a> &nbsp; <a>ArcGIS Online Map Viewer</a> &nbsp; <a>ArcGIS Earth</a></p>
      <p><b>View Footprint In:</b> &nbsp; <a>ArcGIS Online Map Viewer</a></p>
      <p><b>Service Description:</b> State water quality assessment decisions reported to EPA<br>information for each Assessment Unit. For more detailed data, please reference<br>Information on those web services is provided on the public ATTAINS website:</p>
      <p><b>Map Name:</b> ATTAINS Assessment</p>
      <p><a class="v">Legend</a></p>
      <p><a>All Layers and Tables</a></p>
      <p><a>Dynamic Legend</a></p>
      <p><a>Dynamic All Layers</a></p>
      <p class="lh"><b>Layers:</b></p>
      <ul><li><a class="v">ATTAINS Assessment Points</a> (0)</li><li><a class="v">ATTAINS Assessment Lines</a> (1)</li><li><a>ATTAINS Assessment Areas</a> (2)</li><li><a class="v">ATTAINS Assessment Unit Catchment Associations</a> (3)</li></ul>
      <p class="lh"><b>Tables:</b></p>
      <ul class="last"><li><a>ATTAINS Assessment Attribute Summary Table</a> (4)</li><li><a>ATTAINS Assessment Control Table</a> (5)</li><li><a>ATTAINS Assessments by Catchment Table</a> (6)</li><li><a>ATTAINS Assessments by HUC12 Table</a> (7)</li><li><a>ATTAINS Assessment Parameters</a> (8)</li><li><a>ATTAINS Assessment Water Types</a> (9)</li><li><a>ATTAINS Metadata</a> (10)</li></ul>
      <p><b>Description:</b> State water quality assessment decisions reported to EPA under<br>for each Assessment Unit. For more detailed data, please reference the<br>those web services is provided on the public ATTAINS website: https://www</p>
    </article>
  </section>
</div>
</body>
</html>
```
FILE: styles.css
```css
* { box-sizing: border-box; }
body { margin: 0; overflow: hidden; font-family: "Open Sans", "Noto Sans", sans-serif; font-size: 12px; color: #333; }
.defs { position: absolute; }
svg { flex: none; display: block; }
i { font-style: normal; }
.desktop { position: relative; width: 1686px; height: 861px; overflow: hidden; background: #fff; }
.desktop > section { position: absolute; }

/* mail */
.mail { left: 0; top: 813px; width: 598px; height: 48px; display: flex; background: #fff; }
.mail-dark { width: 8px; height: 46px; background: #06142c; border-bottom: 1px solid #d8b868; color: #fff; font-size: 10px; line-height: 7px; overflow: hidden; }
.mail-nav { margin-left: 8px; width: 232px; border-left: 1px solid #888; background: #faf9f8; display: flex; align-items: center; gap: 28px; padding: 17px 0 0 14px; background-image: linear-gradient(#ccc, #ccc); background-size: 100% 1px; background-position: 0 9px; background-repeat: no-repeat; }
.mail-nav svg:nth-child(3) { margin-left: -2px; }
.mail-list { width: 313px; border-left: 1px solid #ccc; padding-left: 28px; font-size: 11px; background: linear-gradient(#fff 41px, #eee 41px); }
.mail-row { display: flex; justify-content: space-between; height: 14px; line-height: 14px; padding-right: 33px; color: #222; white-space: nowrap; }
.mail-prev { line-height: 15px; color: #555; letter-spacing: .1px; }
.mail-scroll { width: 22px; border-right: 1px solid #ccc; }
.mail-scroll i { display: block; width: 15px; height: 48px; padding: 4px 2px; border-top: 38px solid #f0f0f0; border-left: 1px solid #888; border-right: 1px solid #888; background: linear-gradient(#888 1px, #fff 1px); }
.form { left: 598px; top: 813px; width: 560px; height: 48px; border-left: 14px solid #dfebee; background: #fff; }
.form p { margin: 29px 0 0 54px; font-size: 16px; line-height: 26px; color: #444; white-space: nowrap; }
.form b { color: #c33; font-weight: 400; }

/* windows behind */
.peek { left: 1487px; top: 0; width: 199px; height: 42px; display: flex; }
.peek-map { width: 54px; border-top: 4px solid #1a78bd; background: #eae9e2; border-right: 1px solid #aaa; padding: 5px 0 0 9px; }
.peek-app { flex: 1; background: linear-gradient(#f4f4f6 6px, #e2e2e2 6px, #e2e2e2 7px, #f4f4f4 7px, #f4f4f4 28px, #e4e6f4 28px); }

/* main browser */
.win { background: #fff; }
.win-main { left: 0; top: 0; width: 1487px; height: 813px; box-shadow: 0 0 10px rgba(0,0,0,.5); }
.addr { display: flex; align-items: center; height: 26px; padding: 0 0 2px 4px; gap: 15px; }
.c1 { color: #5f6368; } .c2 { color: #b9bcc0; }
.pill { display: flex; align-items: center; background: #f1f3f4; border-radius: 0 0 14px 14px; white-space: nowrap; }
.addr .ic:nth-child(2) { margin-left: 3px; }
.addr .ic:nth-child(3) { margin-left: 2px; }
.addr .pill { width: 1195px; height: 29px; margin: -3px 0 -2px 0; padding: 1px 11px 0 13px; }
.url { color: #5f6368; font-size: 13.500px; margin-left: 9px; letter-spacing: -.08px; }
.url b { color: #202124; font-weight: 400; }
.pill-icons { display: flex; gap: 16px; margin-left: auto; }
.addr > svg:nth-of-type(n+4) { position: relative; left: -2px; }
.update { display: flex; align-items: center; justify-content: space-between; width: 82px; height: 29px; margin: -3px 0 0 -10px; padding: 2px 11px 0 12px; border: 1px solid #188038; border-radius: 15px; background: #e9f1ed; color: #188038; font-size: 12px; letter-spacing: -.15px; }
.marks { display: flex; color: #3c4043; white-space: nowrap; font-size: 11.700px; letter-spacing: -.1px; }
.marks span { display: flex; align-items: center; flex: none; }
.marks svg { margin-right: 8px; }
.m1 { height: 37px; padding-left: 4px; border-bottom: 1px solid #ccc; overflow: hidden; }
.m1 span, .m2 span { width: 152px; height: 36px; }
.m1 span:nth-child(3) { width: 151px; } .m1 span:nth-child(4) { width: 145px; } .m1 span:nth-child(5) { width: 150px; } .m1 span:nth-child(6) { width: 99px; } .m1 span:nth-child(7) { width: 151px; }
.m1 .folder { width: 40px; margin-left: 44px; }

.banner { display: flex; width: 1150px; height: 44px; background: linear-gradient(#02243f, #0d4d80 50%, #1a7abf); color: #dfe4e8; }
.logo { display: flex; align-items: center; width: 171px; padding-left: 2px; font: 29px/44px "Liberation Serif", serif; letter-spacing: .1px; }
.logo svg { margin: 0 1px; }
.tagline { font: 16px/44px Lato, sans-serif; letter-spacing: .65px; padding-top: 3px; width: 692px; }
.find { display: flex; width: 273px; height: 33px; margin-top: 5px; background: #fff; border: 1px solid #444; border-radius: 4px; color: #8b8b8b; font: 13.800px/33px "Liberation Sans", sans-serif; }
.find span { flex: 1; padding-left: 12px; border-right: 1px solid #444; height: 31px; }
.find i { width: 32px; display: flex; align-items: center; justify-content: center; }

.work { display: flex; width: 1150px; height: 706px; }
.side { width: 355px; height: 706px; background: #00446f; font-family: Lato, sans-serif; color: #000; display: flex; flex-direction: column; }
.tabs { display: flex; height: 36px; gap: 2px; background: #1a6aa5; }
.tab { width: 71px; height: 36px; border-radius: 5px 5px 0 0; background: linear-gradient(#5598c6, #42617a); display: flex; align-items: center; justify-content: center; border-right: 1px solid #2d4e68; }
.tab.first { width: 61px; padding-right: 10px; border-top-left-radius: 0; }
.tab.on { background: #00446f; border: 0; height: 37px; }
.side-title { height: 22px; color: #fff; display: flex; align-items: center; justify-content: flex-end; font-size: 14.500px; padding-right: 45px; }
.side-title b { margin-right: 70px; margin-top: -3px; letter-spacing: -.1px; }
.side-search { height: 40px; width: 353px; background: #fff; border-top: 2px solid #00304e; box-shadow: 0 -1px #fff; color: #757575; font-size: 15.500px; line-height: 36px; text-indent: -3px; letter-spacing: .2px; }
.filters { height: 37px; display: flex; align-items: center; color: #fff; font-size: 15px; padding-bottom: 2px; }
.count { width: 111px; height: 18px; background: #fff; color: #000; line-height: 16px; text-indent: -2px; font-size: 14px; border: 1px solid #999; border-left: 0; white-space: nowrap; letter-spacing: -.1px; }
.cb { display: inline-block; width: 13px; height: 13px; background: #fff; border: 1px solid #767676; border-radius: 2px; flex: none; }
.ck { background: #0d74f0; border-color: #0d74f0; position: relative; }
.ck::after { content: ""; position: absolute; left: 3px; top: 0; width: 3.500px; height: 7px; border: solid #fff; border-width: 0 2px 2px 0; transform: rotate(42deg); }
.filters label { display: flex; align-items: center; justify-content: space-between; margin-top: -1px; }
.filters .cb { margin-top: 4px; }
.f1 { width: 64px; margin-left: 16px; } .f2 { width: 84px; margin-left: 15px; }
.funnel { width: 30px; height: 30px; margin: 2px 0 0 21px; border: 2px solid #000; background: #e9eff7; display: flex; align-items: center; justify-content: center; }
.list { position: relative; height: 543px; width: 353px; background: #ebe8e9; padding-top: 3px; border-right: 1px solid #1a7abf; border-bottom: 1px solid #1a7abf; overflow: hidden; }
.thumb { position: absolute; right: 0; top: 39px; width: 6px; height: 189px; border-radius: 3px; background: #8d8d8d; }
.cats p { margin: 0 0 2px; width: 347px; height: 18px; background: #acb998; font-size: 14.700px; line-height: 17px; text-indent: -4px; letter-spacing: .48px; white-space: nowrap; -webkit-text-stroke: .15px #000; }
.cats .pk { background: #bb9aae; }
.cats .imp { text-indent: -5px; margin: 0; }
.entry { width: 347px; border-bottom: 1px solid #c9c6c7; font-size: 13px; font-weight: 300; -webkit-text-stroke: .25px #000; }
.et { display: flex; align-items: flex-start; height: 24px; padding-top: 4px; line-height: 16px; letter-spacing: .42px; white-space: nowrap; }
.et em, .et .cb { width: 8px; margin-right: 2px; font-style: normal; }
.et .cb { border-left: 0; margin-top: 2px; border-radius: 0 2px 2px 0; }
.et svg { margin-left: auto; margin-right: 3px; }
.subs { display: flex; align-items: center; height: 13px; font-style: italic; font-size: 12.500px; padding-left: 10px; white-space: nowrap; letter-spacing: .32px; }
.subs span { margin-left: 3px; }
.s1 { width: 47px; } .s2 { width: 42px; } .s3 { width: 45px; }
.icons { display: flex; gap: 5px; padding-left: 11px; }
.icons svg { width: 20px; height: 20px; }
.icons b, .row b { width: 20px; height: 20px; border-radius: 50%; background: #b7cde3; color: #333; font: bold 12px/20px "Open Sans", sans-serif; text-align: center; -webkit-text-stroke: 0; }
.icons .gap { margin-left: 20px; }
.e1 { height: 69px; } .e1 .icons { margin-top: 6px; }
.e2 { height: 48px; } .e2 .et { height: 22px; padding-top: 2px; }
.e3 { height: 25px; border: 0; overflow: hidden; } .e3 .et { height: 40px; line-height: 14px; padding-top: 2px; }
.side-foot { flex: 1; margin-top: 1px; border-top: 1px solid #fff; background: linear-gradient(#1a7abf, #02243f); display: flex; align-items: center; padding-left: 325px; }

/* map */
.mapbox { position: relative; width: 795px; height: 706px; overflow: hidden; font-family: Lato, sans-serif; }
.sea { font: italic 10.500px "Open Sans", sans-serif; fill: #3f8aa6; }
.dim { fill: #99546b; }
.ctry { font-family: "Noto Serif", "Liberation Serif", serif; fill: #4d3640; }
.city { font: 11.500px "Open Sans", sans-serif; fill: #222; paint-order: stroke; stroke: #fff; stroke-width: 2px; stroke-opacity: .75; }
.city.in { fill: #6e1f32; stroke: none; }
.zero { font: 11px "Open Sans", sans-serif; fill: #444; }
.zoomctl, .extent, .places, .tools, .community, .hint, .credits, .drawer, .dialog { position: absolute; }
.zoomctl { left: 7px; top: 5px; width: 30px; height: 60px; border-radius: 3px; background: rgba(85,105,118,.75); color: #fff; }
.zoomctl i { display: block; height: 30px; font: 24px/28px "Liberation Sans", sans-serif; text-align: center; }
.zoomctl i + i { border-top: 1px solid #566; }
.extent { left: 7px; top: 75px; width: 31px; height: 61px; border-radius: 4px; background: linear-gradient(#505050 30px, #4a4a4a 30px); border: 1px solid #777; display: flex; flex-direction: column; align-items: center; justify-content: space-around; }
.places { left: 7px; top: 145px; display: grid; gap: 3px; }
.places svg { width: 30px; height: 30px; background: #5a646c; border: 1px solid #78848c; border-radius: 2px; }
.tools { left: 45px; top: 5px; display: flex; gap: 10px; }
.tools i { width: 40px; height: 40px; border-radius: 50%; border: 1px solid #4c4c4c; background: rgba(88,88,84,.68); }
.tools svg { width: 38px; height: 38px; }
.community { left: 45px; top: 50px; width: 191px; height: 47px; background: rgba(60,66,64,.75); border: 1px solid #111; border-radius: 3px 3px 0 0; color: #fff; padding: 4px 5px; display: flex; flex-direction: column; white-space: nowrap; }
.community span { font-size: 14px; line-height: 18px; letter-spacing: .35px; }
.community strong { font-weight: 400; font-size: 15.800px; line-height: 19px; letter-spacing: .65px; }
.hint { left: 160px; top: 690px; width: 148px; height: 12px; background: #546872; }
.credits { left: 548px; top: 686px; width: 260px; height: 15px; background: rgba(255,255,255,.7); color: #333; font-size: 13px; line-height: 15px; padding-left: 4px; white-space: nowrap; letter-spacing: .2px; }
.drawer { left: 536px; top: 689px; width: 61px; height: 17px; background: rgba(30,38,44,.85); border: 1px solid #aaa; border-bottom: 0; border-radius: 4px 4px 0 0; }
.drawer i { display: block; width: 0; margin: 7px auto 0; border: 5px solid transparent; border-top: 0; border-bottom: 5px solid #ccc; }
.dialog { left: 44px; top: 97px; width: 380px; height: 600px; background: #fff; border-radius: 4px; box-shadow: 0 1px 8px rgba(0,0,0,.4); color: #111; padding: 1px; }
.dialog header { height: 35px; background: linear-gradient(#02243f, #1a7abf); color: #fff; display: flex; align-items: center; padding: 0 13px 0 10px; font-size: 16.500px; letter-spacing: -.2px; border-radius: 3px 3px 0 0; }
.dialog header svg:nth-of-type(1) { margin-left: auto; margin-right: 23px; }
.dhead { display: flex; align-items: center; height: 43px; padding: 0 13px 0 22px; gap: 8px; font-size: 14px; color: #111; letter-spacing: .3px; margin-bottom: 1px; }
.dhead span { flex: 1; }
.row { display: flex; align-items: flex-start; height: 40px; width: 350px; margin-left: 14px; padding-left: 9px; font-size: 12.500px; line-height: 14px; letter-spacing: .03px; white-space: nowrap; position: relative; font-weight: 300; -webkit-text-stroke: .25px #111; }
.row span { margin: 4px 0 0 40px; }
.row .dots { margin: 15px 6px 0 auto; }
.sel { background: #d9dddf; padding-left: 7px; }
.sel .arr { margin-top: 5px; margin-right: 3px; }
.sel b { margin-left: 9px; }
.sel span { margin: 4px 0 0 5px; letter-spacing: .15px; }
.sel .dots { margin-top: 4px; }
.dialog hr { margin: 6px 14px 7px; border: 0; border-top: 1px solid #888; width: 350px; }
.grip { position: absolute; right: 2px; bottom: 2px; }

/* services window */
.win-rest { left: 1149px; top: 39px; width: 560px; height: 830px; border: 1px solid #8e9190; box-shadow: 0 0 14px rgba(0,0,0,.5); }
.strip { height: 42px; background: #e8eaed; padding: 8px 0 0 8px; display: flex; align-items: center; gap: 16px; }
.btab { width: 240px; height: 34px; background: #fff; border-radius: 8px 8px 0 0; display: flex; align-items: center; padding: 0 12px; color: #5f6368; white-space: nowrap; }
.btab span { width: 176px; margin: 0 12px 0 9px; overflow: hidden; font-size: 11.600px; letter-spacing: -.3px; -webkit-mask-image: linear-gradient(90deg, #000 88%, transparent); mask-image: linear-gradient(90deg, #000 88%, transparent); }
.addr2 { height: 36px; display: flex; align-items: center; gap: 17px; padding-left: 15px; }
.addr2 .pill { width: 460px; height: 28px; border-radius: 14px; padding-left: 13px; margin-left: -2px; overflow: hidden; }
.addr2 .url { letter-spacing: -.14px; }
.m2 { height: 33px; padding-left: 14px; border-bottom: 1px solid #ddd; overflow: hidden; }
.m2 span { height: 28px; }
.m2 span:nth-child(2) { width: 153px; } .m2 span:nth-child(3) { width: 150px; }
.rest { padding: 0 0 0 22px; font: 14px/17px Verdana, "DejaVu Sans", sans-serif; letter-spacing: .22px; word-spacing: .7px; color: #000; white-space: nowrap; }
.rest h2 { margin: 0 0 15px; font-size: 19.200px; line-height: 24px; letter-spacing: .48px; }
.rest p { margin: 0 0 17px; }
.rest .vi { letter-spacing: .3px; word-spacing: 1.200px; }
.rest .lh { margin-bottom: 12px; }
.rest a { color: #00e; text-decoration: underline; }
.rest a.v { color: #551a8b; }
.rest ul { margin: 0 0 17px; padding-left: 40px; line-height: 20px; }
.rest .last { margin-bottom: 16px; }
```
